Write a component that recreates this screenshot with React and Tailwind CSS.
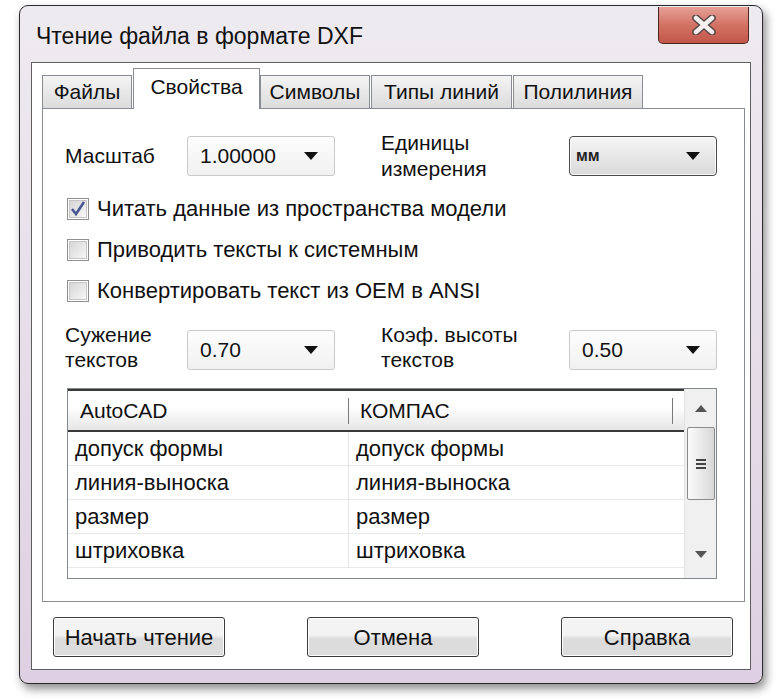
import React from "react";

const font = "font-['Liberation_Sans',Arial,sans-serif]";

function Combo({ value, dark }) {
  if (dark) {
    return (
      <div className="w-[148px] h-[40px] rounded-[4px] border border-[#4a4a4a] bg-gradient-to-b from-[#f6f6f6] to-[#d9d9d9] flex items-center pl-[6px] pr-[16px] shadow-[inset_0_0_0_1px_rgba(255,255,255,0.8)]">
        <span className="text-[16px] font-bold text-[#222] flex-1">мм</span>
        <Arrow />
      </div>
    );
  }
  return (
    <div className="w-[148px] h-[40px] rounded-[3px] border border-[#c9c9c9] bg-gradient-to-b from-[#fdfdfd] to-[#f1f1f1] flex items-center pl-[12px] pr-[16px]">
      <span className="text-[21px] text-[#111] flex-1">{value}</span>
      <Arrow />
    </div>
  );
}

function Arrow() {
  return (
    <svg width="14" height="8" viewBox="0 0 14 8">
      <path d="M0 0 L14 0 L7 8 Z" fill="#111" />
    </svg>
  );
}

function Check({ checked, label }) {
  return (
    <div className="h-[41px] flex items-center pl-[2px]">
      <div className="w-[22px] h-[22px] border border-[#8e8f8f] bg-white p-[1px] flex">
        <div className="flex-1 bg-gradient-to-br from-[#d6d6d6] to-[#f7f7f7] border border-[#c6c6c6] flex items-center justify-center">
          {checked && (
            <svg width="16" height="16" viewBox="0 0 16 16">
              <path d="M2 8 L6 13 L14 1" fill="none" stroke="#4b5695" strokeWidth="2.6" />
            </svg>
          )}
        </div>
      </div>
      <span className="ml-[8px] text-[22px] text-[#111]">{label}</span>
    </div>
  );
}

const tabs = [
  { t: "Файлы", w: "w-[90px]" },
  { t: "Свойства", w: "w-[127px]", active: true },
  { t: "Символы", w: "w-[110px]" },
  { t: "Типы линий", w: "w-[141px]" },
  { t: "Полилиния", w: "w-[130px]" },
];

const rows = ["допуск формы", "линия-выноска", "размер", "штриховка"];

function Button({ children }) {
  return (
    <div className="w-[172px] h-[40px] rounded-[3px] border border-[#3c3c3c] bg-gradient-to-b from-[#f3f3f3] from-45% to-[#dcdcdc] to-55% flex items-center justify-center text-[22px] text-[#111] shadow-[inset_0_0_0_1px_rgba(255,255,255,0.9)]">
      {children}
    </div>
  );
}

export default function App() {
  return (
    <div className={`w-[778px] h-[700px] bg-white pt-[5px] pl-[19px] ${font}`}>
      <div className="w-[744px] h-[679px] rounded-[9px] border border-[#2a2a2a] bg-gradient-to-b from-[#eeebf0] to-[#ded0e2] shadow-[3px_5px_10px_rgba(0,0,0,0.45)] flex flex-col">
        {/* title bar */}
        <div className="h-[56px] flex justify-between">
          <div className="pl-[16px] pt-[13px] text-[23px] text-[#111]">Чтение файла в формате DXF</div>
          <div className="mr-[13px] mt-[1px] w-[91px] h-[37px] rounded-b-[5px] border border-t-0 border-[#4a2620] bg-gradient-to-b from-[#e6a198] via-[#d27264] to-[#c2574a] flex items-center justify-center">
            <svg width="26" height="20" viewBox="0 0 26 20">
              <path d="M5 3 L21 17 M21 3 L5 17" stroke="#5a4444" strokeWidth="7.5" strokeLinecap="round" />
              <path d="M5 3 L21 17 M21 3 L5 17" stroke="#f4f0f0" strokeWidth="4.5" strokeLinecap="round" />
            </svg>
          </div>
        </div>

        {/* client */}
        <div className="mx-[11px] mb-[13px] flex-1 bg-white border border-[#5e5e5e] flex flex-col pl-[10px] pr-[5px] pt-[5px]">
          <div className="flex items-end h-[40px] relative z-10">
            {tabs.map((tab) =>
              tab.active ? (
                <div
                  key={tab.t}
                  className={`${tab.w} h-[41px] -mb-[1px] bg-white border border-b-0 border-[#898c95] flex items-center justify-center text-[21px] text-[#111] pb-[4px]`}
                >
                  {tab.t}
                </div>
              ) : (
                <div
                  key={tab.t}
                  className={`${tab.w} h-[33px] mr-[1px] bg-gradient-to-b from-[#f4f4f4] to-[#dcdcdc] border border-b-0 border-[#898c95] flex items-center justify-center text-[21px] text-[#111]`}
                >
                  {tab.t}
                </div>
              )
            )}
          </div>

          {/* panel */}
          <div className="border border-[#898c95] h-[494px] pl-[22px] pt-[21px] flex flex-col">
            <div className="flex items-center">
              <div className="w-[122px] text-[21px] text-[#111]">Масштаб</div>
              <Combo value="1.00000" />
              <div className="ml-[46px] w-[188px] text-[21px] leading-[26px] text-[#111]">
                Единицы
                <br />
                измерения
              </div>
              <Combo dark />
            </div>

            <div className="mt-[6px] flex flex-col">
              <Check checked label="Читать данные из пространства модели" />
              <Check label="Приводить тексты к системным" />
              <Check label="Конвертировать текст из OEM в ANSI" />
            </div>

            <div className="mt-[17px] flex items-center">
              <div className="w-[122px] text-[21px] leading-[25px] text-[#111] -mt-[6px]">
                Сужение
                <br />
                текстов
              </div>
              <Combo value="0.70" />
              <div className="ml-[46px] w-[188px] text-[21px] leading-[25px] text-[#111] -mt-[6px]">
                Коэф. высоты
                <br />
                текстов
              </div>
              <Combo value="0.50" />
            </div>

            {/* table */}
            <div className="mt-[16px] ml-[2px] w-[650px] h-[191px] border border-[#828790] flex overflow-hidden">
              <div className="flex-1 flex flex-col">
                <div className="h-[43px] border-t-2 border-b-2 border-[#3a3a3a] bg-gradient-to-b from-[#ffffff] from-40% to-[#e6e6e6] flex items-center text-[21px] text-[#111]">
                  <div className="w-[280px] pl-[12px]">AutoCAD</div>
                  <div className="w-[1px] h-[26px] bg-[#7a7a7a]" />
                  <div className="w-[323px] pl-[11px]">КОМПАС</div>
                  <div className="w-[1px] h-[26px] bg-[#7a7a7a]" />
                </div>
                {rows.map((r) => (
                  <div key={r} className="h-[34px] flex items-center border-b border-[#e8e8e8] text-[22px] text-[#111] shrink-0">
                    <div className="w-[280px] pl-[7px]">{r}</div>
                    <div className="w-[1px] h-full bg-[#e6e6e6]" />
                    <div className="flex-1 pl-[7px]">{r}</div>
                  </div>
                ))}
              </div>
              {/* scrollbar */}
              <div className="w-[32px] bg-[#f0f0f0] border-l border-[#e2e2e2] flex flex-col items-center">
                <div className="h-[38px] flex items-center justify-center">
                  <svg width="12" height="7" viewBox="0 0 12 7">
                    <path d="M0 7 L6 0 L12 7 Z" fill="#555" />
                  </svg>
                </div>
                <div className="w-[28px] h-[73px] rounded-[2px] border border-[#8b8b8b] bg-gradient-to-r from-[#fbfbfb] to-[#d8d8d8] flex flex-col items-center justify-center gap-[2px]">
                  <div className="w-[10px] h-[2px] bg-[#444]" />
                  <div className="w-[10px] h-[2px] bg-[#444]" />
                  <div className="w-[10px] h-[2px] bg-[#444]" />
                </div>
                <div className="flex-1" />
                <div className="h-[38px] flex items-center justify-center pb-[10px]">
                  <svg width="12" height="7" viewBox="0 0 12 7">
                    <path d="M0 0 L12 0 L6 7 Z" fill="#555" />
                  </svg>
                </div>
              </div>
            </div>
          </div>

          {/* buttons */}
          <div className="mt-[15px] flex justify-between pl-[11px] pr-[12px]">
            <Button>Начать чтение</Button>
            <Button>Отмена</Button>
            <Button>Справка</Button>
          </div>
        </div>
      </div>
    </div>
  );
}
